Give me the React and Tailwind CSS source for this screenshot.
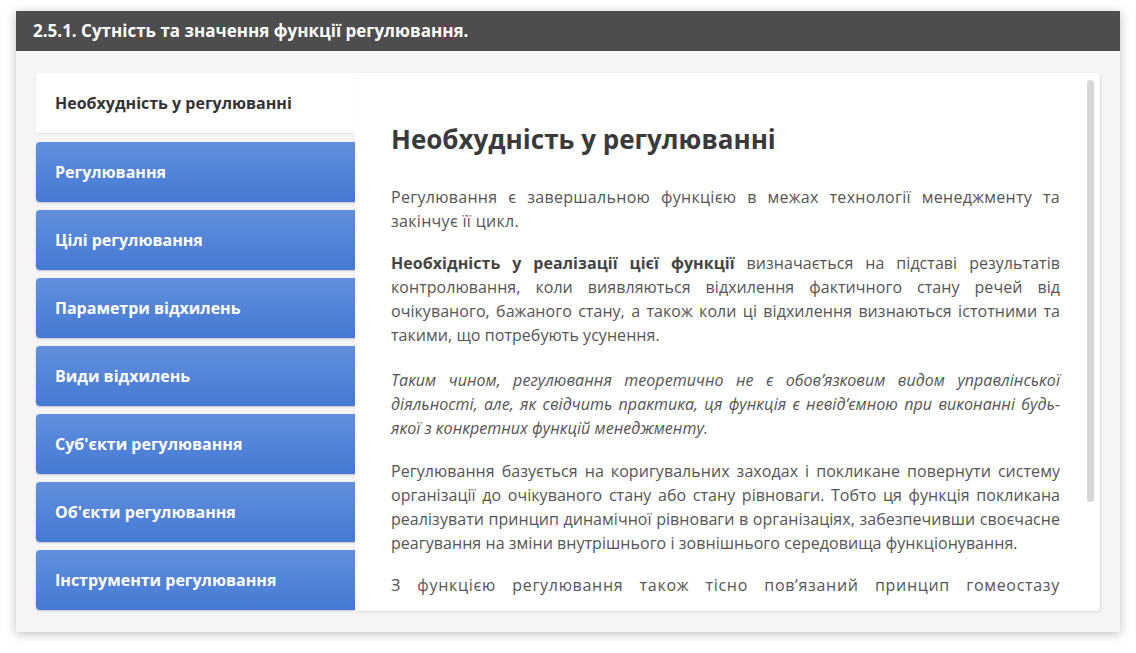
export default function App() {
  const tabs = [
    "Регулювання",
    "Цілі регулювання",
    "Параметри відхилень",
    "Види відхилень",
    "Суб'єкти регулювання",
    "Об'єкти регулювання",
    "Інструменти регулювання",
  ];
  return (
    <div className="bg-white w-[1136px] h-[653px] pt-[11px] px-[16px]" style={{ fontFamily: '"Open Sans", sans-serif' }}>
      <div className="w-[1104px] shadow-[0_2px_10px_rgba(0,0,0,0.25)]">
        <div className="h-[40px] bg-[#4d4d4d] flex items-center px-[17px] text-white font-bold text-[17px]">
          2.5.1. Сутність та значення функції регулювання.
        </div>
        <div className="bg-[#f5f5f5] pt-[22px] pb-[21px] px-[20px]">
          <div className="flex h-[538px]">
            <div className="w-[319px] flex flex-col shrink-0">
              <div className="h-[60px] bg-white rounded-tl-[4px] flex items-center pl-[19px] text-[#333] font-bold text-[16px] shadow-[0_1px_2px_rgba(0,0,0,0.08)]">
                Необхудність у регулюванні
              </div>
              {tabs.map((t, i) => (
                <div
                  key={t}
                  className={`${i === 0 ? "mt-[9px]" : "mt-[8px]"} h-[60px] rounded-l-[4px] bg-gradient-to-b from-[#618fdb] to-[#4679d5] flex items-center pl-[19px] text-white font-bold text-[16px] shadow-[0_1px_2px_rgba(0,0,0,0.2)]`}
                >
                  {t}
                </div>
              ))}
            </div>
            <div className="flex-1 bg-white rounded-r-[4px] shadow-[1px_1px_3px_rgba(0,0,0,0.12)] relative">
              <div className="absolute right-[6px] top-[7px] w-[7px] h-[422px] rounded-full bg-[#d6d6d6]"></div>
              <div className="h-[523px] overflow-hidden">
                <div className="pl-[36px] pr-[40px] pt-[48px] text-[16px] leading-[24px] text-[#555] text-justify tracking-[0.05px]">
                  <h1 className="text-[26px] font-bold text-[#3a3a3a] leading-[36px] mb-[28px] text-left tracking-normal">Необхудність у регулюванні</h1>
                  <p className="mb-[18px] tracking-[0.3px]">
                    Регулювання є завершальною функцією в межах технології менеджменту та закінчує її цикл.
                  </p>
                  <p className="mb-[21px]">
                    <b className="text-[#444]">Необхідність у реалізації цієї функції</b> визначається на підставі результатів контролювання, коли виявляються відхилення фактичного стану речей від очікуваного, бажаного стану, а також коли ці відхилення визнаються істотними та такими, що потребують усунення.
                  </p>
                  <p className="mb-[19px] italic">
                    Таким чином, регулювання теоретично не є обов’язковим видом управлінської діяльності, але, як свідчить практика, ця функція є невід’ємною при виконанні будь-якої з конкретних функцій менеджменту.
                  </p>
                  <p className="mb-[18px]">
                    Регулювання базується на коригувальних заходах і покликане повернути систему організації до очікуваного стану або стану рівноваги. Тобто ця функція покликана реалізувати принцип динамічної рівноваги в організаціях, забезпечивши своєчасне реагування на зміни внутрішнього і зовнішнього середовища функціонування.
                  </p>
                  <p className="tracking-[0.7px]">
                    З функцією регулювання також тісно пов’язаний принцип гомеостазу організації, тобто здатності зберігати свої основні характеристики.
                  </p>
                </div>
              </div>
            </div>
          </div>
        </div>
      </div>
    </div>
  );
}
